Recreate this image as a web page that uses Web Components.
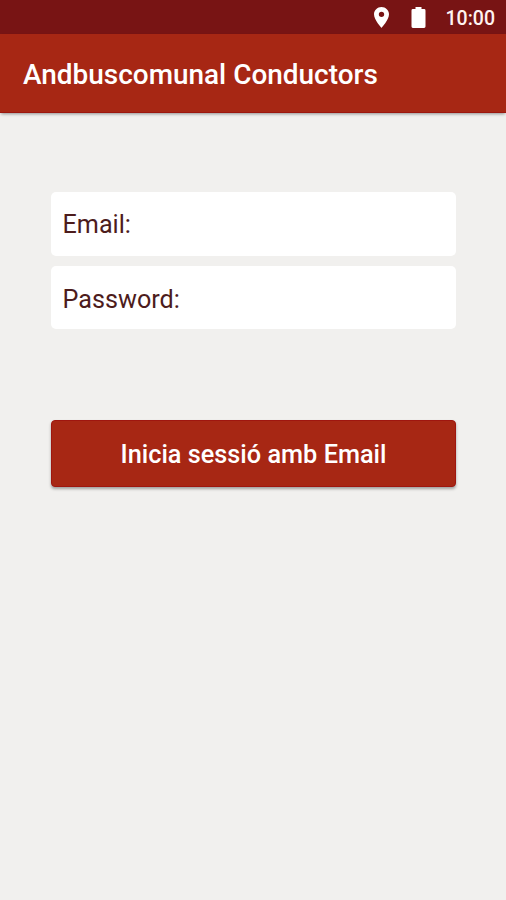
<!DOCTYPE html>
<html lang="ca"><head><meta charset="utf-8"><title>Andbuscomunal Conductors</title>
<style>html,body{margin:0;height:100%}body{overflow:hidden;background:#f1f0ee}</style></head>
<body><login-screen></login-screen>
<script>
const define=(name,html)=>{const t=document.createElement('template');t.innerHTML=html;
customElements.define(name,class extends HTMLElement{constructor(){super();this.attachShadow({mode:'open'}).append(t.content.cloneNode(true));}});};
define('status-bar',`<style>:host{display:flex;height:34px;background:#781414;color:#fff3f1;align-items:center;justify-content:flex-end;box-sizing:border-box;padding:2px 11px 0 0;font-size:19.5px;font-weight:500}svg{display:block;fill:#fff}.pin{margin:0 22px 1px 0}.bat{margin:0 20px 1px 0}</style>
<svg class="pin" width="15" height="21" viewBox="5 2 14 20" preserveAspectRatio="none"><path d="M12 2C8.13 2 5 5.13 5 9c0 5.25 7 13 7 13s7-7.75 7-13c0-3.87-3.13-7-7-7zm0 9.500a2.500 2.500 0 1 1 0-5 2.500 2.500 0 0 1 0 5z"/></svg>
<svg class="bat" width="15" height="21" viewBox="0 0 14 21"><path d="M4 0h6v2h2.600Q14 2 14 3.400v16.200Q14 21 12.600 21H1.400Q0 21 0 19.600V3.400Q0 2 1.400 2H4z"/></svg><span>10:00</span>`);
define('app-bar',`<style>:host{display:flex;height:79px;align-items:center;box-sizing:border-box;padding:2px 0 0 23px;border-bottom:1px solid #9c170e;background:#a72714;color:#fff;font-size:27.950px;font-weight:500;box-shadow:0 2px 3px -1px #0006}</style><slot></slot>`);
define('text-field',`<style>:host{display:flex;align-items:center;height:63.500px;box-sizing:border-box;padding:var(--label-drop,1px) 11.500px 0;border-radius:5px;background:#fff;color:#4d1c1c;font-size:25.200px}</style><slot></slot>`);
define('action-button',`<style>:host{display:flex;align-items:center;justify-content:center;height:67px;box-sizing:border-box;padding-top:2px;border:1px solid #9f160f;border-radius:4px;background:#a72714;color:#fff;font-size:25.300px;font-weight:500;box-shadow:0 2px 3px #0005}</style><slot></slot>`);
define('login-screen',`<style>:host{display:block;height:900px;font-family:Roboto,sans-serif;background:#f1f0ee}main{display:grid;gap:10px;padding:79px 50px 0 51px}.password{--label-drop:4px}action-button{margin-top:81px}</style>
<status-bar></status-bar><app-bar>Andbuscomunal Conductors</app-bar><main><text-field>Email:</text-field><text-field class="password">Password:</text-field><action-button>Inicia sessió amb Email</action-button></main>`);
</script></body></html>
